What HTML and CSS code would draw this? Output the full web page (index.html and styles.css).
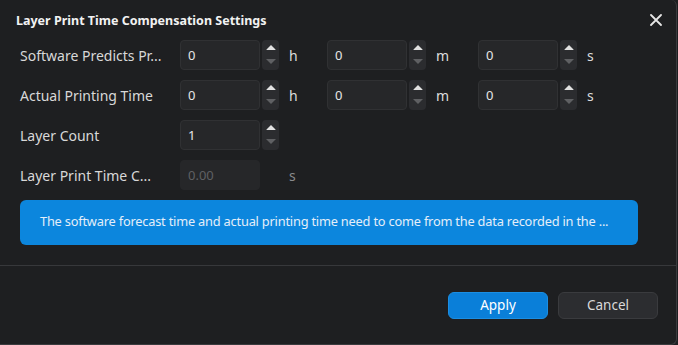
FILE: index.html
```html
<!DOCTYPE html>
<html lang="en">
<head>
  <meta charset="UTF-8" />
  <title>Layer Print Time Compensation Settings</title>
  <link rel="stylesheet" href="styles.css">
</head>
<body>
  <div class="dialog">
    <div class="header">
      <div class="header-title">Layer Print Time Compensation Settings</div>
      <button class="close-btn" aria-label="Close">
        <svg width="12" height="12" viewBox="0 0 12 12"><path d="M1 1L11 11M11 1L1 11" stroke="#e6e6e6" stroke-width="1.8" stroke-linecap="round"/></svg>
      </button>
    </div>

    <div class="content">
      <!-- Software predicted time -->
      <div class="row">
        <div class="label" title="Software Predicts Print Time">Software Predicts Pr...</div>
        <div class="group">
          <div class="input">0</div>
          <div class="spinner"><span class="up"></span><span class="down"></span></div>
          <div class="unit">h</div>
        </div>
        <div class="group">
          <div class="input">0</div>
          <div class="spinner"><span class="up"></span><span class="down"></span></div>
          <div class="unit">m</div>
        </div>
        <div class="group">
          <div class="input">0</div>
          <div class="spinner"><span class="up"></span><span class="down"></span></div>
          <div class="unit">s</div>
        </div>
      </div>

      <!-- Actual printing time -->
      <div class="row">
        <div class="label">Actual Printing Time</div>
        <div class="group">
          <div class="input">0</div>
          <div class="spinner"><span class="up"></span><span class="down"></span></div>
          <div class="unit">h</div>
        </div>
        <div class="group">
          <div class="input">0</div>
          <div class="spinner"><span class="up"></span><span class="down"></span></div>
          <div class="unit">m</div>
        </div>
        <div class="group">
          <div class="input">0</div>
          <div class="spinner"><span class="up"></span><span class="down"></span></div>
          <div class="unit">s</div>
        </div>
      </div>

      <div class="row">
        <div class="label">Layer Count</div>
        <div class="group">
          <div class="input">1</div>
          <div class="spinner"><span class="up"></span><span class="down"></span></div>
        </div>
      </div>

      <div class="row">
        <div class="label" title="Layer Print Time Compensation">Layer Print Time C...</div>
        <div class="group">
          <div class="input disabled">0.00</div>
          <div class="spinner-gap"></div>
          <div class="unit muted">s</div>
        </div>
      </div>

      <div class="info">The software forecast time and actual printing time need to come from the data recorded in the ...</div>
    </div>

    <div class="footer">
      <button class="btn primary">Apply</button>
      <button class="btn">Cancel</button>
    </div>
  </div>
</body>
</html>
```

FILE: styles.css
```css
html, body {
  margin: 0;
  padding: 0;
  height: 100%;
  background: #1e1f21;
  font-family: "Noto Sans", "Open Sans", sans-serif;
  color: #dcdcdc;
}

.dialog {
  box-sizing: border-box;
  height: 100%;
  width: 677px;
  display: flex;
  flex-direction: column;
  background: #1e1f21;
  border-right: 1px solid #3a3b3e;
  border-bottom: 1px solid #3a3b3e;
  border-radius: 0 6px 6px 0;
}

.header {
  height: 40px;
  display: flex;
  justify-content: space-between;
  align-items: center;
  padding: 0 13px 0 16px;
}

.header-title {
  font-weight: bold;
  font-size: 12.5px;
  color: #f2f2f2;
}

.close-btn {
  background: none;
  border: none;
  padding: 0;
  width: 14px;
  height: 14px;
  display: flex;
  align-items: center;
  justify-content: center;
  cursor: pointer;
}

.content {
  padding: 0 38px 20px 20px;
  display: flex;
  flex-direction: column;
  gap: 10px;
  border-bottom: 1px solid #37383b;
}

.row {
  height: 30px;
  display: grid;
  grid-template-columns: 160px 147px 151px 1fr;
  align-items: center;
}

.label {
  font-size: 14px;
  color: #d8d8d8;
  white-space: nowrap;
}

.group {
  display: flex;
  align-items: center;
  height: 30px;
}

.input {
  box-sizing: border-box;
  width: 80px;
  height: 30px;
  padding: 0 7px;
  line-height: 28px;
  font-size: 13px;
  color: #e6e6e6;
  background: #262729;
  border: 1px solid #303133;
  border-radius: 4px;
}

.input.disabled {
  color: #5f6063;
  border-color: #262729;
}

.spinner {
  margin-left: 2px;
  width: 17px;
  height: 30px;
  background: #2b2c2f;
  border-radius: 4px;
  display: flex;
  flex-direction: column;
  align-items: center;
  justify-content: space-between;
  padding: 5px 0 6px;
  box-sizing: border-box;
}

.spinner-gap {
  width: 19px;
}

.spinner .up {
  width: 0;
  height: 0;
  border-left: 5px solid transparent;
  border-right: 5px solid transparent;
  border-bottom: 5px solid #e2e2e2;
  border-radius: 1px;
}

.spinner .down {
  width: 0;
  height: 0;
  border-left: 5px solid transparent;
  border-right: 5px solid transparent;
  border-top: 5px solid #5f6063;
}

.unit {
  padding-left: 10px;
  font-size: 14px;
  color: #dcdcdc;
}

.unit.muted {
  color: #8a8b8d;
}

.info {
  height: 45px;
  box-sizing: border-box;
  padding: 0 16px 0 20px;
  line-height: 43px;
  background: #0c86dd;
  border-radius: 6px;
  font-size: 12.8px;
  letter-spacing: -0.2px;
  color: #e4eef9;
  white-space: nowrap;
}

.footer {
  flex: 1;
  display: flex;
  justify-content: flex-end;
  align-items: center;
  gap: 10px;
  padding: 0 18px 0 0;
}

.btn {
  width: 100px;
  height: 27px;
  border-radius: 6px;
  border: 1px solid #3a3b3e;
  background: #2c2d30;
  color: #dadada;
  font-family: inherit;
  font-size: 13.5px;
  cursor: pointer;
}

.btn.primary {
  background: #0a7fd9;
  border-color: #1b8ee3;
  color: #ffffff;
}
```
